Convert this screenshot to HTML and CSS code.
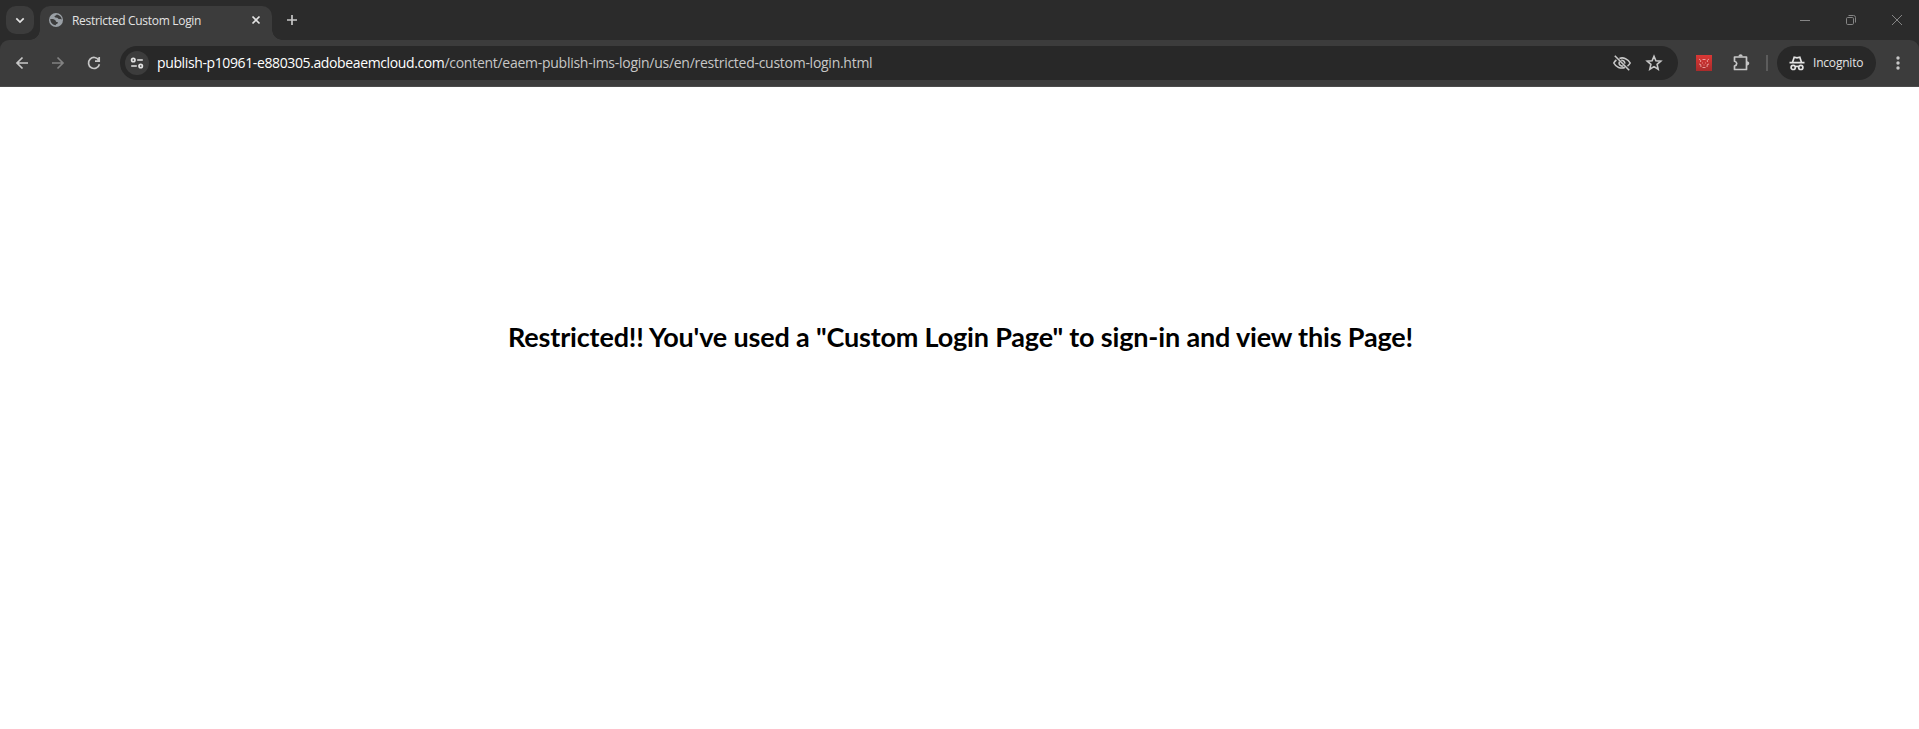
FILE: index.html
```html
<!DOCTYPE html>
<html lang="en">
<head>
<meta charset="utf-8">
<title>Restricted Custom Login</title>
<link rel="stylesheet" href="styles.css">
</head>
<body>
<header class="tabstrip">
  <button class="tab-search" aria-label="Search tabs"><svg width="28" height="28" viewBox="0 0 28 28"><path class="line bright" d="M10.300 12.300 14 16l3.700-3.700"/></svg></button>
  <div class="tab">
    <svg class="favicon" width="14" height="14" viewBox="0 0 14 14"><circle cx="7" cy="7" r="7" fill="#9aa0a6"/><path d="M1.200 6.200C2.800 5.800 5.500 6.300 6.300 7.200 7 8 6.800 9 8.300 9c.8 0 .8 1.300-.1 1.700-.9.4-1.400.3-1.400 1.500-2.900-.2-5.200-2.500-5.600-6ZM8 1.400c-.9.3-.8 1.100-1.800 1.400-.9.2-.9 1.300.1 1.600 1.200.3 1.700-.2 2.300.7.600.9 1.300 1.300 2.200.9.9-.4 1.300.3 2 .6C12.600 3.900 10.600 1.900 8 1.400Z" fill="#3c3c3c"/></svg>
    <span class="tab-title">Restricted Custom Login</span>
    <svg class="tab-close" width="16" height="16" viewBox="0 0 16 16"><path class="line bright" d="m4.500 4.500 7 7m0-7-7 7"/></svg>
  </div>
  <button class="new-tab" aria-label="New tab"><svg width="28" height="28" viewBox="0 0 28 28"><path class="line" d="M14 9v10M9 14h10"/></svg></button>
  <div class="window-controls">
    <svg width="46" height="40" viewBox="0 0 46 40"><path class="thin" d="M18 20.500h10"/></svg>
    <svg width="46" height="40" viewBox="0 0 46 40"><rect class="thin" x="18.500" y="17.500" width="7" height="7" rx="1.200"/><path class="thin" d="M20.500 15.500h5a2 2 0 0 1 2 2v5"/></svg>
    <svg width="46" height="40" viewBox="0 0 46 40"><path class="thin" d="m18 15 10 10m0-10L18 25"/></svg>
  </div>
</header>
<nav class="toolbar">
  <div class="nav-buttons">
    <svg width="34" height="34" viewBox="0 0 34 34"><path class="line" d="M23 17H12m5.500-5.500L12 17l5.500 5.500"/></svg>
    <svg class="disabled" width="34" height="34" viewBox="0 0 34 34"><path class="line" d="M11 17h11m-5.500-5.500L22 17l-5.500 5.500"/></svg>
    <svg width="34" height="34" viewBox="0 0 34 34"><path class="line" d="M21.800 14.200A5.500 5.500 0 1 0 22.400 18.200M22.200 11v4.200H18"/></svg>
  </div>
  <div class="omnibox">
    <span class="site-info"><svg width="24" height="24" viewBox="0 0 24 24"><g class="line bright"><circle cx="8.300" cy="9" r="1.700"/><path d="M12.200 9h5.600M6.200 15h5.600"/><circle cx="15.700" cy="15" r="1.700"/></g></svg></span>
    <span class="url"><span class="host">publish-p10961-e880305.adobeaemcloud.com</span><span class="path">/content/eaem-publish-ims-login/us/en/restricted-custom-login.html</span></span>
    <span class="omnibox-actions">
      <svg width="20" height="20" viewBox="0 0 20 20"><path class="line eye" d="M7.400 5.400c4-1.400 8.700.5 10.800 4.600-.7 1.400-1.700 2.400-2.700 3.100M12.900 14.500C8.700 16 3.900 14.200 1.800 10c.6-1.200 1.500-2.200 2.600-3M9.200 7.300c2-.4 3.900 1.300 3.500 3.400M11.300 12.800c-2.500 1-5-1.300-4-4M2.800 2.800l14.400 14.400"/></svg>
      <svg width="20" height="20" viewBox="0 0 20 20"><path class="star" d="m10 3.300 1.900 4.500 4.900.4-3.700 3.200 1.100 4.800-4.200-2.600-4.200 2.600 1.100-4.800-3.700-3.200 4.900-.4Z"/></svg>
    </span>
  </div>
  <svg class="extension" width="16" height="16" viewBox="0 0 16 16"><defs><linearGradient id="red" x2="0" y2="1"><stop stop-color="#da3835"/><stop offset="1" stop-color="#a92b2b"/></linearGradient></defs><path fill="url(#red)" d="M0 0h16v16H0z"/><path d="m3 4 1.800 1.500L4.500 7M13 4l-1.800 1.500.3 1.500M3 9l1.700.5L5 12M13 9l-1.700.5L11 12M6.500 4.500h3M6.500 12.500h3" stroke="#f2b5b3" stroke-width=".8" fill="none"/><path d="M6 8h1m2 0h1m-2.500 2h1" stroke="#ef8582"/></svg>
  <svg class="puzzle" width="20" height="20" viewBox="0 0 20 20"><path class="line" d="M3.500 4H15.500V16.500H3.500v-3.500c3-.8 3-4 0-4.800Z" stroke-linejoin="round"/><path fill="#c7c7c7" d="M7.500 3.600c0-3 4.200-3 4.200 0ZM16 8.200c3 0 3 4.200 0 4.200Z"/></svg>
  <span class="divider"></span>
  <div class="incognito">
    <svg width="16" height="16" viewBox="0 0 16 16"><path class="line bright" d="M.5 7.700h15M3.600 7 5.200 2.200l2.800.6 2.800-.6L12.400 7M6.300 12c.8-.8 2.600-.8 3.400 0"/><circle class="line bright" cx="4.200" cy="12.400" r="2.100"/><circle class="line bright" cx="11.800" cy="12.400" r="2.100"/></svg>
    <span>Incognito</span>
  </div>
  <svg class="menu" width="20" height="20" viewBox="0 0 20 20"><g fill="#c7c7c7"><circle cx="10" cy="5" r="1.700"/><circle cx="10" cy="10" r="1.700"/><circle cx="10" cy="15" r="1.700"/></g></svg>
</nav>
<main class="page">
  <h1>Restricted!! You've used a "Custom Login Page" to sign-in and view this Page!</h1>
</main>
</body>
</html>
```
FILE: styles.css
```css
* { box-sizing: border-box; }
body { margin: 0; height: 729px; overflow: hidden; background: #fff; font-family: "Open Sans", "Noto Sans", sans-serif; }
button { padding: 0; border: 0; background: none; }
svg { display: block; flex: none; }
.line { fill: none; stroke: #c7c7c7; stroke-width: 1.7; }
.bright { stroke: #e3e3e3; }
.thin { fill: none; stroke: #858585; stroke-width: 1; }
.eye { stroke-width: 1.6; }
.star { fill: none; stroke: #c7c7c7; stroke-width: 1.6; }
.tabstrip { display: flex; align-items: flex-start; height: 50px; margin-bottom: -10px; padding: 6px 0 0 6px; background: #2b2b2b; }
.tab-search { width: 28px; height: 28px; border-radius: 10px; background: #3c3c3c; }
.tab { position: relative; display: flex; align-items: center; width: 232px; height: 34px; margin-left: 6px; padding: 0 8px 6px 9px; border-radius: 10px 10px 0 0; background: #3c3c3c; color: #e3e3e3; font-size: 12px; }
.tab::before, .tab::after { content: ""; position: absolute; bottom: 0; width: 10px; height: 10px; }
.tab::before { left: -10px; background: radial-gradient(circle at 0 0, transparent 9.5px, #3c3c3c 10px); }
.tab::after { right: -10px; background: radial-gradient(circle at 100% 0, transparent 9.5px, #3c3c3c 10px); }
.tab-title { margin-left: 9px; white-space: nowrap; letter-spacing: -0.3px; }
.tab-close { margin-left: auto; }
.new-tab { width: 28px; height: 28px; margin-left: 6px; }
.window-controls { display: flex; margin: -6px -1px 0 auto; }
.toolbar { display: flex; align-items: center; height: 47px; padding: 0 10px 1px 5px; background: #3c3c3c; border-bottom: 1px solid #4b4b4b; border-radius: 9px 9px 0 0; }
.nav-buttons { display: flex; gap: 2px; }
.disabled { opacity: .5; }
.omnibox { display: flex; align-items: center; width: 1558px; height: 34px; margin-left: 9px; padding: 0 14px 0 5px; border-radius: 17px; background: #282828; }
.site-info { width: 24px; height: 24px; border-radius: 50%; background: #3c3c3c; }
.url { margin-left: 8px; font-size: 14px; line-height: 20px; white-space: nowrap; color: #c7c7c7; letter-spacing: -0.27px; }
.host { color: #fff; letter-spacing: -0.38px; }
.omnibox-actions { display: flex; gap: 12px; margin-left: auto; }
.extension { margin-left: 18px; }
.puzzle { margin-left: 19px; }
.divider { width: 2px; height: 16px; margin-left: 15px; background: #5c5c5c; }
.incognito { display: flex; align-items: center; width: 99px; height: 34px; margin-left: 9px; padding-left: 12px; gap: 8px; border-radius: 17px; background: #282828; color: #e3e3e3; font-size: 12px; letter-spacing: -0.2px; }
.menu { margin-left: 12px; }
.page { display: flex; justify-content: center; padding: 232px 0 0 2px; }
h1 { margin: 0; font: 700 27px/36px Lato, sans-serif; letter-spacing: -0.17px; color: #000; white-space: nowrap; }
```
